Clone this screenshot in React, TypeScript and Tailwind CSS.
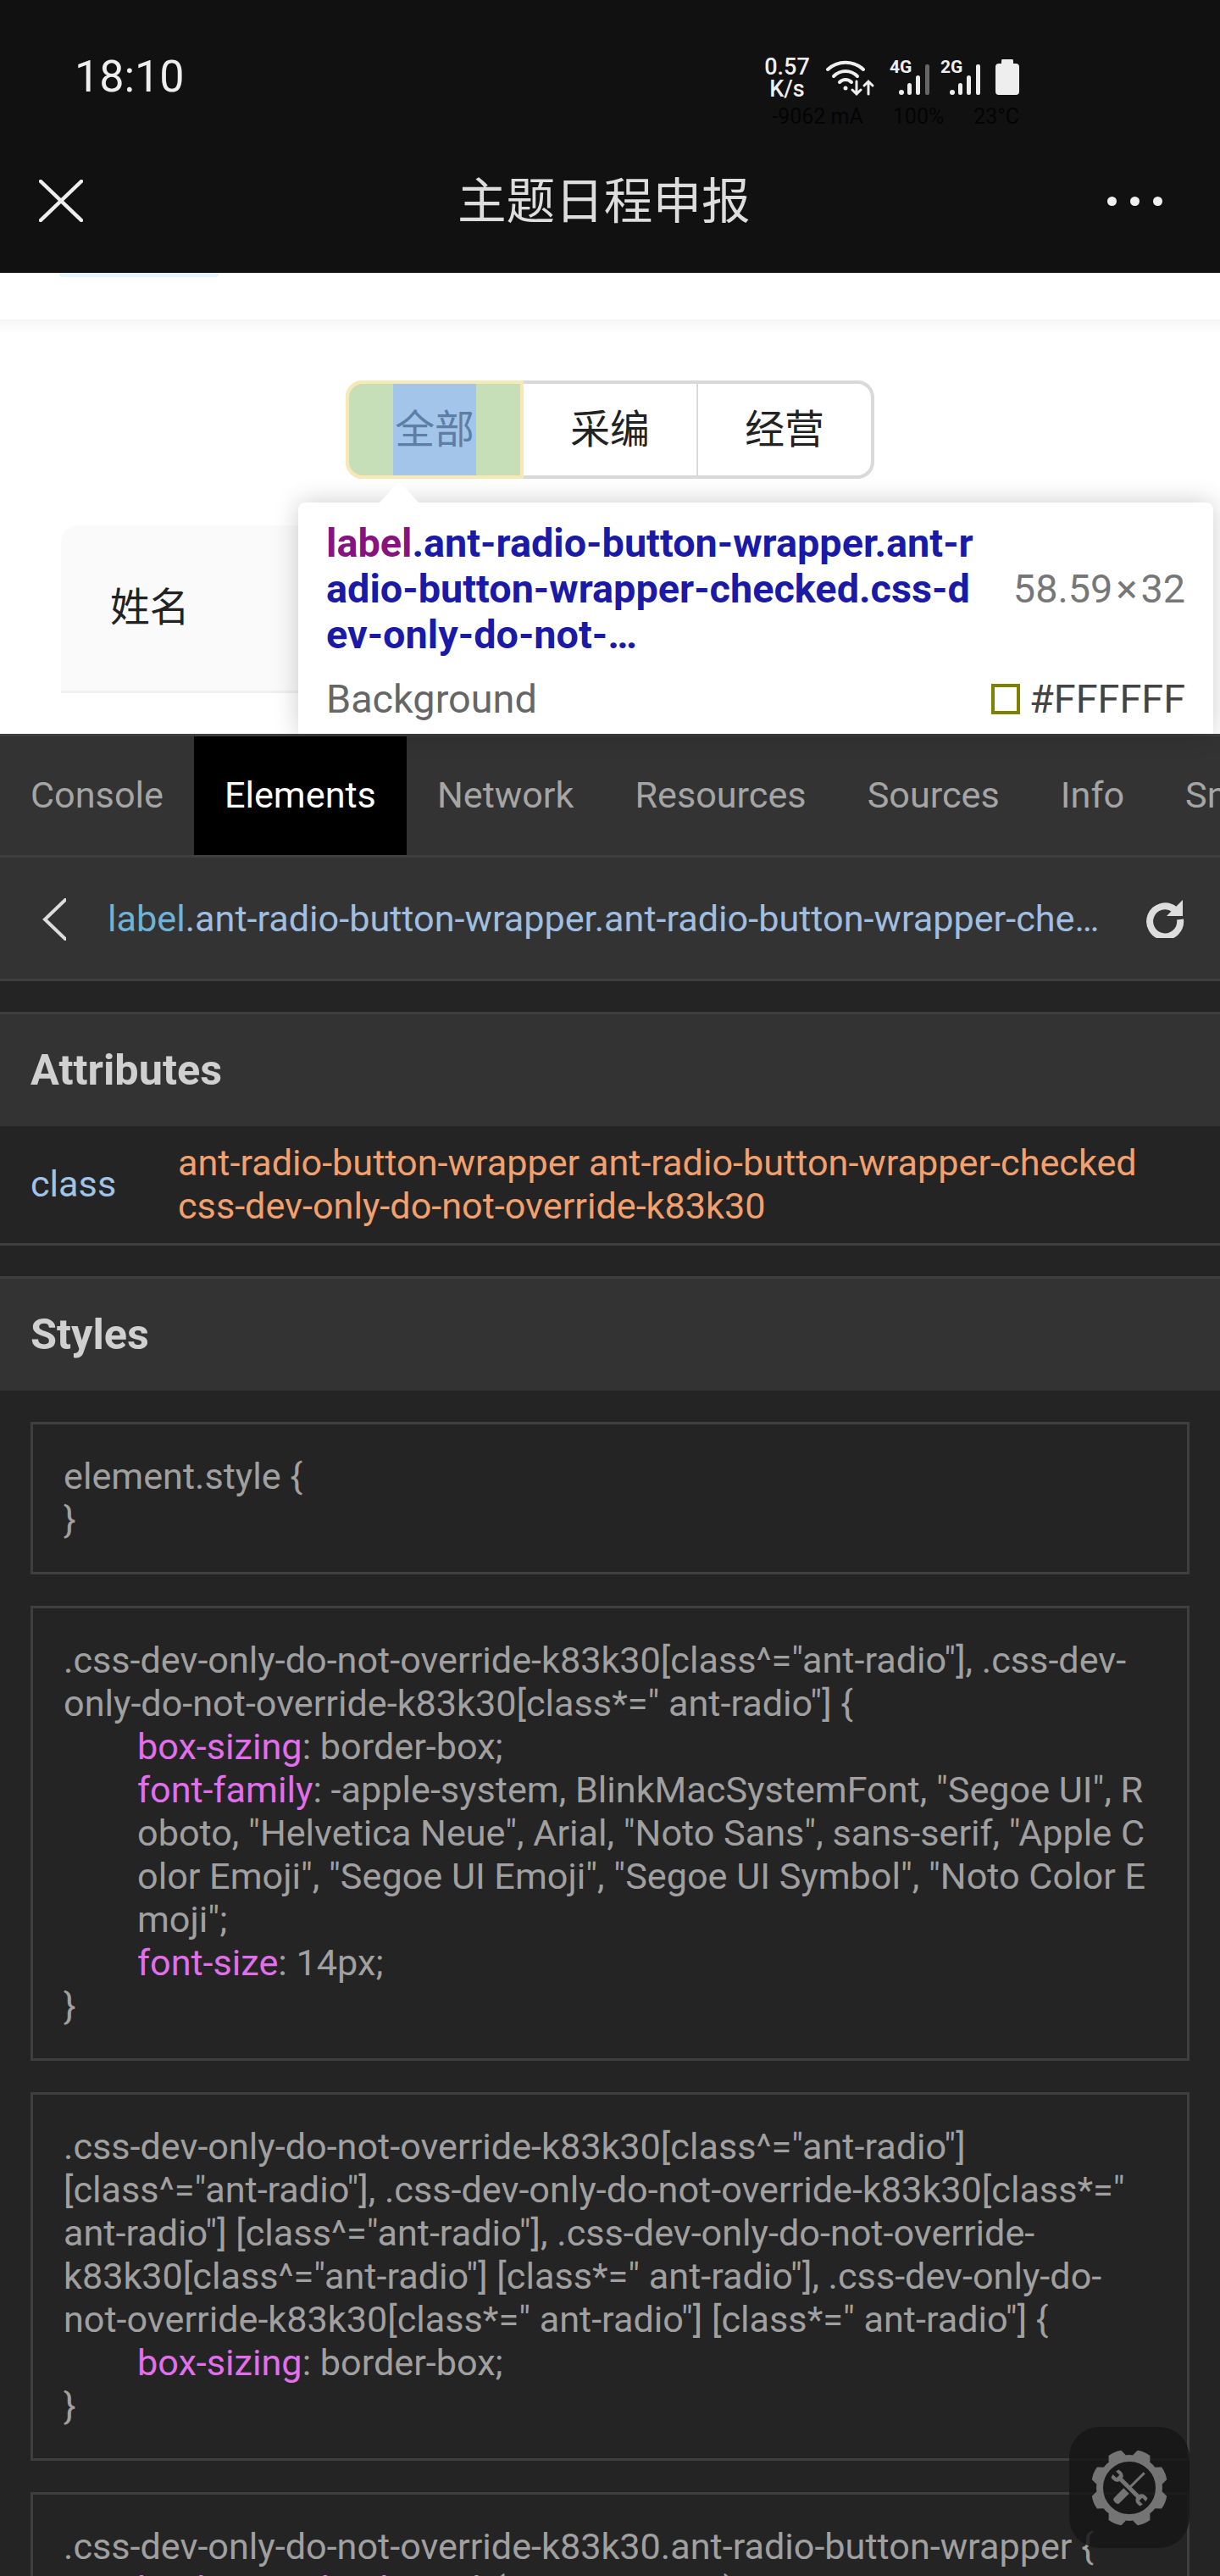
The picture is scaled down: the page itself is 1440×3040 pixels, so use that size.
// App.tsx - devtools panel over a mobile webview

const SANS = "font-['Roboto','Noto_Sans_CJK_SC',sans-serif]"

const tabs = ["Console", "Elements", "Network", "Resources", "Sources", "Info", "Snippets"]

type Line = { text: string; prop?: string; indent?: boolean }

const cards: Line[][] = [
  [{ text: "element.style {" }, { text: "}" }],
  [
    { text: '.css-dev-only-do-not-override-k83k30[class^="ant-radio"], .css-dev-' },
    { text: 'only-do-not-override-k83k30[class*=" ant-radio"] {' },
    { prop: "box-sizing", text: ": border-box;", indent: true },
    { prop: "font-family", text: ': -apple-system, BlinkMacSystemFont, "Segoe UI", R', indent: true },
    { text: 'oboto, "Helvetica Neue", Arial, "Noto Sans", sans-serif, "Apple C', indent: true },
    { text: 'olor Emoji", "Segoe UI Emoji", "Segoe UI Symbol", "Noto Color E', indent: true },
    { text: 'moji";', indent: true },
    { prop: "font-size", text: ": 14px;", indent: true },
    { text: "}" },
  ],
  [
    { text: '.css-dev-only-do-not-override-k83k30[class^="ant-radio"]' },
    { text: '[class^="ant-radio"], .css-dev-only-do-not-override-k83k30[class*="' },
    { text: 'ant-radio"] [class^="ant-radio"], .css-dev-only-do-not-override-' },
    { text: 'k83k30[class^="ant-radio"] [class*=" ant-radio"], .css-dev-only-do-' },
    { text: 'not-override-k83k30[class*=" ant-radio"] [class*=" ant-radio"] {' },
    { prop: "box-sizing", text: ": border-box;", indent: true },
    { text: "}" },
  ],
  [
    { text: ".css-dev-only-do-not-override-k83k30.ant-radio-button-wrapper {" },
    { prop: "background-color", text: ": rgb(255, 255, 255);", indent: true },
  ],
]

function StatusIcons() {
  return (
    <div className="flex items-start">
      <div className="w-[58px] text-center text-[27px] leading-[26px] font-medium text-[#eee] mt-[-4px]">
        <div>0.57</div>
        <div>K/s</div>
      </div>
      {/* wifi with up/down arrows */}
      <svg width="58" height="44" viewBox="0 0 58 44" className="ml-[17px]" fill="none" stroke="#eee" strokeWidth="4" strokeLinecap="round">
        <path d="M2 12 C14 1 32 1 44 12" />
        <path d="M9 20 C17 12 29 12 37 20" />
        <path d="M16 27 C20 23 26 23 30 27" />
        <circle cx="23" cy="34" r="2.5" fill="#eee" stroke="none" />
        <path d="M36 26 V41 M31 36 L36 41 L41 36" strokeWidth="3" />
        <path d="M50 41 V26 M45 31 L50 26 L55 31" strokeWidth="3" />
      </svg>
      <div className="relative ml-[17px] w-[48px] h-[42px]">
        <span className="absolute left-0 top-[-3px] text-[21px] leading-[24px] font-bold text-[#eee]">4G</span>
        <SignalBars last="#666" />
      </div>
      <div className="relative ml-[12px] w-[48px] h-[42px]">
        <span className="absolute left-0 top-[-3px] text-[21px] leading-[24px] font-bold text-[#eee]">2G</span>
        <SignalBars last="#eee" />
      </div>
      <svg width="28" height="42" viewBox="0 0 28 42" className="ml-[17px]">
        <path d="M8 0 H20 Q21 0 21 2 V5 H24 Q28 5 28 9 V38 Q28 42 24 42 H4 Q0 42 0 38 V9 Q0 5 4 5 H7 V2 Q7 0 8 0 Z" fill="#eee" />
      </svg>
    </div>
  )
}

function SignalBars({ last }: { last: string }) {
  return (
    <svg width="37" height="36" viewBox="0 0 37 36" className="absolute left-[11px] top-[6px]">
      <circle cx="3" cy="33" r="3" fill="#eee" />
      <rect x="10" y="22" width="5" height="14" rx="2.5" fill="#eee" />
      <rect x="20" y="13" width="5" height="23" rx="2.5" fill="#eee" />
      <rect x="31" y="0" width="5" height="36" rx="2" fill={last} />
    </svg>
  )
}

function GearButton() {
  const teeth = [22.5, 67.5, 112.5, 157.5, 202.5, 247.5, 292.5, 337.5]
  return (
    <div className="absolute left-[1262px] top-[2864px] w-[142px] h-[143px] rounded-[36px] bg-[#161616]/85 flex items-center justify-center">
      <svg width="100" height="100" viewBox="-50 -50 100 100" fill="#747474">
        <circle r="35" fill="none" stroke="#747474" strokeWidth="8" />
        {teeth.map((a) => (
          <path key={a} d="M-11 -37 L-8 -44.5 Q0 -46.5 8 -44.5 L11 -37 Z" transform={`rotate(${a})`} />
        ))}
        {/* wrench */}
        <g transform="rotate(-45)">
          <rect x="-2.5" y="-16" width="5" height="32" />
          <path d="M-6.5 -24 L-2.5 -25 L-2.5 -19 L2.5 -19 L2.5 -25 L6.5 -24 Q8 -16 3 -14 L-3 -14 Q-8 -16 -6.5 -24 Z" />
          <path d="M-6.5 24 L-2.5 25 L-2.5 19 L2.5 19 L2.5 25 L6.5 24 Q8 16 3 14 L-3 14 Q-8 16 -6.5 24 Z" />
        </g>
        {/* screwdriver */}
        <g transform="rotate(45)">
          <rect x="-1.5" y="-25" width="3" height="25" />
          <path d="M-4.5 5 H4.5 V21 Q4.5 24 0 24 Q-4.5 24 -4.5 21 Z" />
        </g>
      </svg>
    </div>
  )
}

function CodeCard({ lines }: { lines: Line[] }) {
  return (
    <div className="border-[3px] border-[#3f3f3f] mb-[37px] pl-[36px] pr-[30px] py-[36px] text-[43.2px] leading-[51px] text-[#a0a0a0] whitespace-pre">
      {lines.map((l, i) => (
        <div key={i} className={l.indent ? "pl-[87px]" : ""}>
          {l.prop && <span className="text-[#e36eec]">{l.prop}</span>}
          {l.text}
        </div>
      ))}
    </div>
  )
}

export default function App() {
  return (
    <div className={`relative w-[1440px] h-[3040px] overflow-hidden bg-[#242424] ${SANS}`}>
      {/* app title bar */}
      <div className="h-[322px] bg-[#111111] flex flex-col">
        <div className="flex justify-between pl-[88px] pr-[237px] pt-[60px] h-[190px]">
          <div className="text-[52px] leading-[62px] text-[#eee]">18:10</div>
          <div className="flex flex-col items-end pt-[10px]">
            <StatusIcons />
            <div className="flex gap-[35px] text-[25px] leading-[30px] text-[#040404] mt-[5px]">
              <span>-9062 mA</span>
              <span>100%</span>
              <span>23°C</span>
            </div>
          </div>
        </div>
        <div className="flex items-center pl-[46px] pr-[68px] h-[94px]">
          <svg width="52" height="50" viewBox="0 0 52 50" stroke="#eee" strokeWidth="4.5" strokeLinecap="round">
            <path d="M2 2 L50 48 M50 2 L2 48" />
          </svg>
          <div className="ml-[442px] mt-[4px] text-[57.6px] leading-[70px] text-[#dddddd]">主题日程申报</div>
          <div className="ml-auto flex gap-[16px]">
            <span className="w-[11px] h-[11px] rounded-full bg-[#f0f0f0]" />
            <span className="w-[11px] h-[11px] rounded-full bg-[#f0f0f0]" />
            <span className="w-[11px] h-[11px] rounded-full bg-[#f0f0f0]" />
          </div>
        </div>
      </div>

      {/* page under the inspector */}
      <div className="relative h-[544px] bg-white">
        <div className="ml-[70px] w-[188px] h-[5px] bg-[#e6f4ff] rounded-b-[4px]" />
        <div className="mt-[50px] h-[16px] bg-gradient-to-b from-[#f5f5f5] to-white" />
        <div className="mt-[56px] mx-auto w-[624px] h-[116px] flex rounded-[20px] border-[4px] border-[#d9d9d9] bg-white text-[46.8px] text-[#222]">
          <div className="w-[210px] -my-[4px] -ml-[4px] border-[4px] border-[#f8e8b4] rounded-l-[20px] bg-[#c6dfb9] flex justify-center">
            <span className="w-[98px] bg-[#a2c5e9] text-[#5d7ea6] flex items-center justify-center whitespace-nowrap">全部</span>
          </div>
          <div className="w-[206px] flex items-center justify-center border-r-[2px] border-[#d9d9d9]">采编</div>
          <div className="flex-1 flex items-center justify-center">经营</div>
        </div>
        <div className="mt-[55px] mx-[72px] h-[198px] rounded-tl-[20px] bg-[#fafafa] border-b-[3px] border-[#f0f0f0] flex items-center pl-[58px] text-[46.8px] text-[#222]">
          姓名
        </div>

        {/* inspector tooltip */}
        <div className="absolute left-[352px] top-[271px] w-[1080px] h-[273px] bg-white rounded-t-[8px] shadow-[0_0_30px_rgba(0,0,0,0.2)] px-[33px] pt-[21px] text-[46.8px] leading-[54px]">
          <div className="absolute left-[96px] top-[-25px] w-0 h-0 border-l-[23px] border-r-[23px] border-b-[25px] border-l-transparent border-r-transparent border-b-white" />
          <div className="flex justify-between items-center">
            <div className="font-bold text-[#1a1aa6] whitespace-pre">
              <div><span className="text-[#881280]">label</span>.ant-radio-button-wrapper.ant-r</div>
              <div>adio-button-wrapper-checked.css-d</div>
              <div>ev-only-do-not-…</div>
            </div>
            <div className="text-[#777777] flex">
              58.59<span className="mx-[4px]">×</span>32
            </div>
          </div>
          <div className="flex justify-between items-center mt-[22px]">
            <div className="text-[#666666]">Background</div>
            <div className="flex items-center text-[#444444]">
              <span className="w-[34px] h-[36px] border-[4px] border-[#808000] mr-[11px]" />
              #FFFFFF
            </div>
          </div>
        </div>
      </div>

      {/* tab bar */}
      <div className="h-[146px] bg-[#333333] border-t-[3px] border-b-[3px] border-[#3f3f3f] flex text-[43.2px] text-[#a5a5a5] whitespace-nowrap overflow-hidden">
        {tabs.map((t) => (
          <div
            key={t}
            className={
              t === "Elements"
                ? "h-full flex items-center px-[36px] bg-black text-white"
                : "h-full flex items-center px-[36px]"
            }
          >
            {t}
          </div>
        ))}
      </div>

      {/* breadcrumb */}
      <div className="h-[146px] bg-[#333333] border-b-[3px] border-[#3f3f3f] flex items-center pl-[50px] text-[43.2px] whitespace-nowrap">
        <svg width="28" height="50" viewBox="0 0 28 50" className="mt-[2px]" fill="none" stroke="#ddd" strokeWidth="4" strokeLinecap="round">
          <path d="M27 2 L3 25 L27 48" />
        </svg>
        <div className="ml-[49px] mt-[4px] w-[1168px] text-[#a0bfe0]">
          <span className="text-[#6db4d8]">label</span>.ant-radio-button-wrapper.ant-radio-button-wrapper-che…
        </div>
        <svg width="46" height="46" viewBox="0 0 46 46" className="ml-[57px]" fill="none">
          <path d="M34 12 A18 18 0 1 0 41 24" stroke="#ddd" strokeWidth="8" />
          <path d="M44 1 V20 H25 Z" fill="#ddd" />
        </svg>
      </div>

      <div className="h-[36px] bg-[#242424]" />

      {/* attributes */}
      <div className="h-[135px] bg-[#333333] border-t-[3px] border-[#3f3f3f] flex items-center pl-[36px] text-[50.4px] font-bold text-[#d0d0d0]">
        Attributes
      </div>
      <div className="h-[141px] bg-[#242424] border-b-[3px] border-[#3f3f3f] flex items-center pl-[36px] text-[43.2px]">
        <div className="w-[174px] text-[#a0c4e8]">class</div>
        <div className="leading-[51px] text-[#f2a06e] whitespace-pre">
          <div>ant-radio-button-wrapper ant-radio-button-wrapper-checked</div>
          <div>css-dev-only-do-not-override-k83k30</div>
        </div>
      </div>

      <div className="h-[36px] bg-[#242424]" />

      {/* styles */}
      <div className="h-[135px] bg-[#333333] border-t-[3px] border-[#3f3f3f] flex items-center pl-[36px] text-[50.4px] font-bold text-[#d0d0d0]">
        Styles
      </div>
      <div className="px-[36px] pt-[37px] w-[1440px]">
        {cards.map((c, i) => (
          <CodeCard key={i} lines={c} />
        ))}
      </div>

      <GearButton />
    </div>
  )
}
